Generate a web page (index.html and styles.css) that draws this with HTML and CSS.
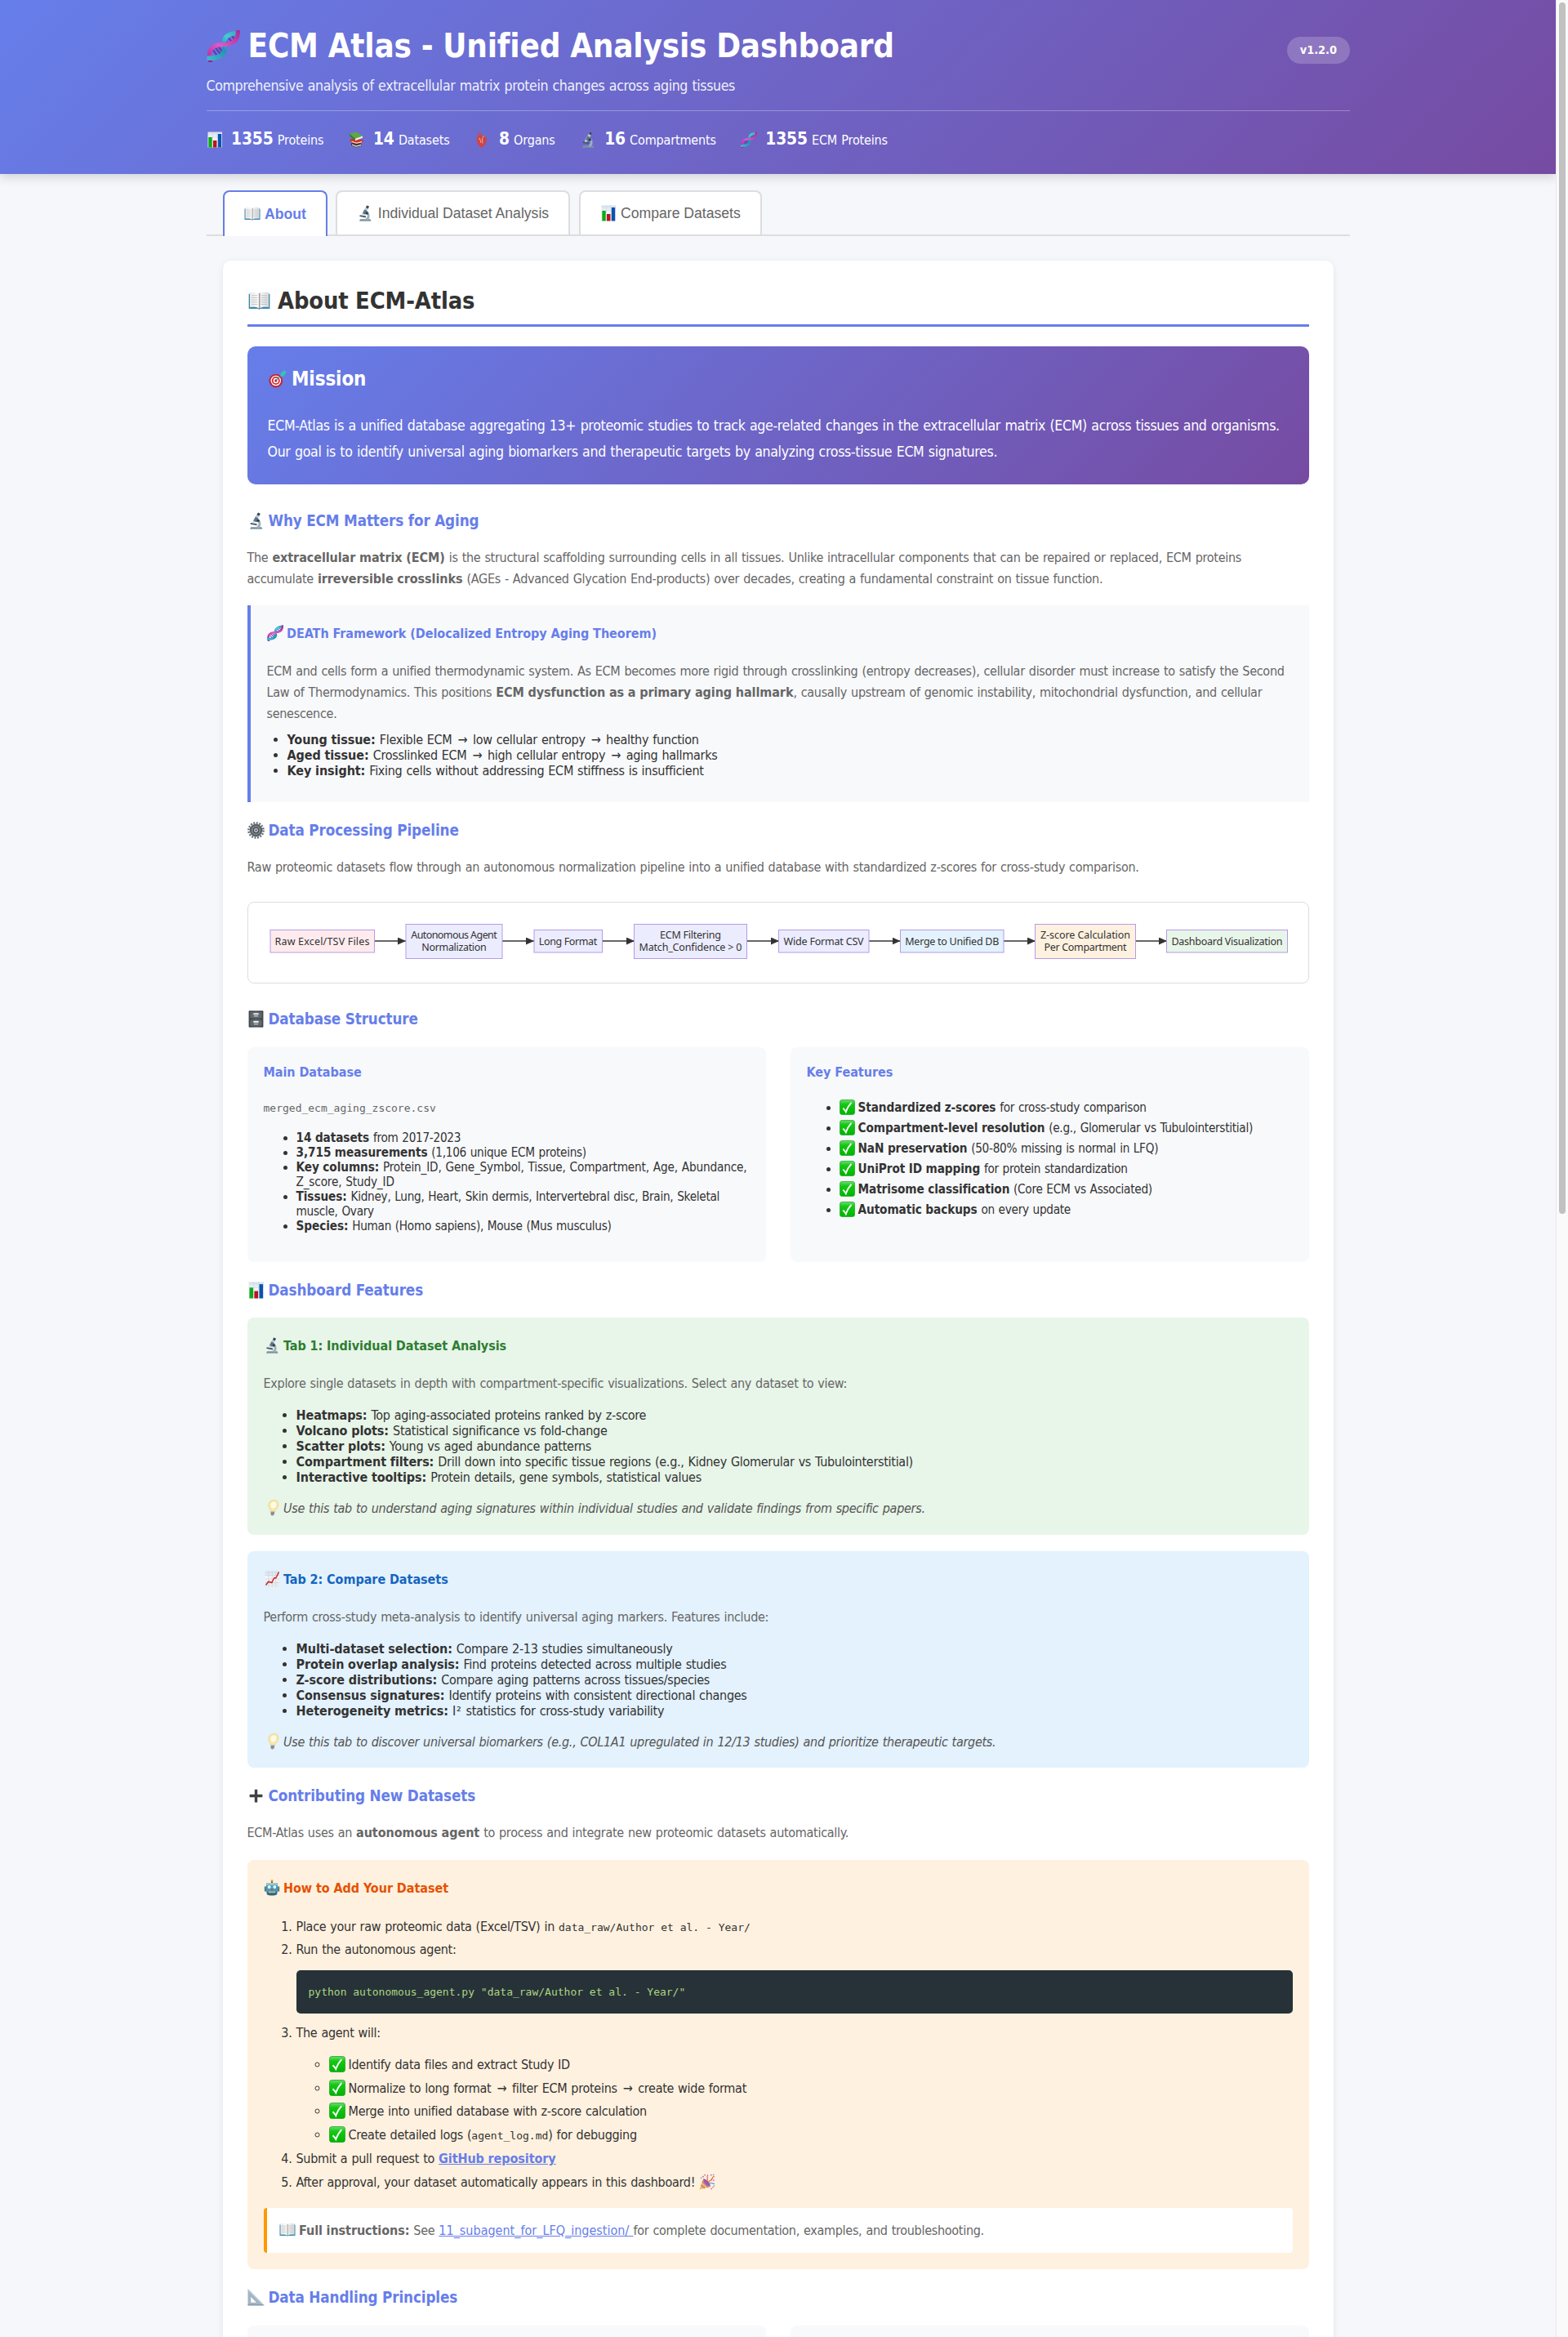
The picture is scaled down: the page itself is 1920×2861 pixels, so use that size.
FILE: index.html
```html
<!DOCTYPE html>
<html lang="en">
<head>
<meta charset="utf-8">
<title>ECM Atlas - Unified Analysis Dashboard</title>
<link rel="stylesheet" href="styles.css">
</head>
<body>
<svg class="sprite" aria-hidden="true">
  <defs>
    <linearGradient id="gPage" x1="0" x2="1"><stop offset="0" stop-color="#e9e9ea"/><stop offset=".45" stop-color="#fff"/><stop offset=".5" stop-color="#9a9a9a"/><stop offset=".58" stop-color="#f4f4f4"/><stop offset="1" stop-color="#d9d9dc"/></linearGradient>
    <linearGradient id="gSheet" x1="0" y1="0" x2="0" y2="1"><stop offset="0" stop-color="#d3deea"/><stop offset=".4" stop-color="#f3f6f8"/><stop offset="1" stop-color="#e6eaee"/></linearGradient>
    <linearGradient id="gCheck" x1="0" y1="0" x2="0" y2="1"><stop offset="0" stop-color="#6fdc6f"/><stop offset=".3" stop-color="#14c814"/><stop offset="1" stop-color="#00b400"/></linearGradient>
    <linearGradient id="gCab" x1="0" x2="1"><stop offset="0" stop-color="#454b50"/><stop offset=".5" stop-color="#6b7378"/><stop offset="1" stop-color="#454b50"/></linearGradient>
    <linearGradient id="gPink" gradientUnits="userSpaceOnUse" x1="0" y1="20" x2="20" y2="0"><stop offset="0" stop-color="#b3249c"/><stop offset=".45" stop-color="#e05ac8"/><stop offset="1" stop-color="#a32a96"/></linearGradient>
    <linearGradient id="gCyan" gradientUnits="userSpaceOnUse" x1="0" y1="20" x2="20" y2="0"><stop offset="0" stop-color="#3fc0cf"/><stop offset=".45" stop-color="#2a8fb5"/><stop offset=".7" stop-color="#45cbd6"/><stop offset="1" stop-color="#2f9cb5"/></linearGradient>
  </defs>
  <symbol id="i-dna" viewBox="0 0 20 20">
    <path d="M3.500 12.500l3.500 4.500M5 11l4 5M7 10.500l3 4M10.500 6.500l3 3M12.500 4.500l3.500 4M15 3.500l2.500 3.500" stroke="#5b3fae" stroke-width="1.100" fill="none"/>
    <path d="M10.600 10.500C9.300 5.500 12 2.300 20 2" fill="none" stroke="url(#gCyan)" stroke-width="2.800"/>
    <path d="M2 19.500C0 12.500 3.500 9.300 9.500 9.300S19 7.500 19 .5" fill="none" stroke="url(#gPink)" stroke-width="2.600"/>
    <path d="M0 17.600C7.500 17.600 11.600 16 10.600 10.500" fill="none" stroke="url(#gCyan)" stroke-width="2.900"/>
    <path d="M1 19.600h2.200" stroke="#8e1f80" stroke-width=".9"/>
  </symbol>
  <symbol id="i-bars" viewBox="0 0 20 20">
    <rect x="1.500" y=".5" width="17.500" height="19" fill="url(#gSheet)"/>
    <path d="M7.400.5v19M13 .5v19M1.500 7h17.500M1.500 13h17.500" stroke="#c8d2dc" stroke-width=".5"/>
    <rect x="2.300" y="7" width="4.400" height="12.500" fill="#0caa18"/><rect x="8" y="11" width="4.400" height="8.500" fill="#bd1220"/><rect x="13.800" y="3" width="4.400" height="16.500" fill="#0b52b4"/>
  </symbol>
  <symbol id="i-books" viewBox="0 0 20 20">
    <path d="M4 14.500l7-1.500 6 2v2.500l-7 2-6-2.500z" fill="#3a3232"/><path d="M5 16l5 2 6.500-1.700" stroke="#f4efe6" stroke-width="1.200" fill="none"/>
    <path d="M2.500 9.500l8-1 8 2v2.500l-8 2.500-7-2.500z" fill="#cf3328"/><path d="M4.500 12.300l6 2 6.500-1.700" stroke="#f4efe6" stroke-width="1.100" fill="none"/>
    <path d="M1.500 2.500L11 .800l7 4.700-9 3.300z" fill="#5da843"/><path d="M1.500 2.500L9 8.800v2.400L2.500 6z" fill="#397f2c"/><path d="M9 8.800l9-3.300v2.200L9 11.200z" fill="#f1eee2"/>
  </symbol>
  <symbol id="i-heart" viewBox="0 0 20 20">
    <path d="M8 1.500v5M11.500 1v5" stroke="#4b7fc4" stroke-width="2"/><path d="M5.500 4c1-2.500 3-2 3.800.5" stroke="#d9444c" stroke-width="2" fill="none"/>
    <path d="M4.500 6.500C7 3.500 9.500 4.500 11 4.800c3 .5 5.500 2.500 5 6.500-.5 3.500-3 7-6.500 8.200C6.500 18.500 2 11.500 4.500 6.500z" fill="#d4433f"/>
    <path d="M12.500 5.500c-3 2-2 6-1.500 9M6.500 8c1.500 1.500 2.500 3 2.500 6" stroke="#f5a090" stroke-width="1.100" fill="none"/><path d="M9.500 6c2.500 2 4 4 3.500 8" stroke="#4b6fb4" stroke-width=".8" fill="none"/>
  </symbol>
  <symbol id="i-scope" viewBox="0 0 20 20">
    <path d="M4 17.300h12.500l1 2.400H3z" fill="#7d93a2"/><path d="M10.500 8.500c4.500.5 5 7.500 1 9.300" stroke="#9db0bc" stroke-width="2.700" fill="none"/>
    <path d="M3.500 13.200l7.500 1.300" stroke="#4a5965" stroke-width="1.800"/><path d="M12.300.500l2.700 1.300-5 10-3.700-1.500z" fill="#b5c6d2"/><path d="M12.300.500l2.700 1.300-1.300 2.600L11 3z" fill="#39444f"/>
    <path d="M9.300 5.500l3.500 1.700-2.300 4.500-3.500-1.500z" fill="#5d7586"/><path d="M6.500 10l2.500 1.200-1 2-2-1z" fill="#cbd8e0"/><circle cx="12.300" cy="10" r="1.700" fill="#31404e"/>
  </symbol>
  <symbol id="i-book" viewBox="0 0 20 20">
    <path d="M.5 3.500h19V17H11l-1 .8-1-.8H.5z" fill="#3b87ab"/><path d="M1.500 2.300c3-.8 6-.8 8.500.6 2.500-1.400 5.500-1.400 8.500-.6v13.500c-3-.6-6-.5-8.500 1-2.500-1.500-5.500-1.600-8.500-1z" fill="url(#gPage)"/>
    <path d="M3 5h5.500M3 7h5.500M3 9h5.500M3 11h5.500M3 13h5.500M11.500 5H17M11.500 7H17M11.500 9H17M11.500 11H17M11.500 13H17" stroke="#b9b9bc" stroke-width=".6"/>
  </symbol>
  <symbol id="i-target" viewBox="0 0 20 20">
    <circle cx="8" cy="12" r="7.500" fill="#c71f2b"/><circle cx="8" cy="11.800" r="5.700" fill="#fff"/><circle cx="8" cy="11.800" r="4.500" fill="#d12a34"/><circle cx="8" cy="11.800" r="2.900" fill="#fff"/><circle cx="8" cy="11.800" r="1.500" fill="#c71f2b"/>
    <path d="M8 11.800L16 4" stroke="#3f8f94" stroke-width="1"/><path d="M13 6.800l.5-3.500L18 0l.3 1.700 1.700.4L16.500 7z" fill="#36c3b8"/>
  </symbol>
  <symbol id="i-gear" viewBox="0 0 20 20">
    <circle cx="10" cy="10" r="8.600" fill="none" stroke="#6b7279" stroke-width="2.500" stroke-dasharray="1.900 1.475"/><circle cx="10" cy="10" r="6.300" fill="#858c93" stroke="#596067" stroke-width="2.200"/><circle cx="10" cy="10" r="3" fill="#d9dcdf" stroke="#474d53" stroke-width="1.400"/><circle cx="10" cy="10" r="1.100" fill="#444"/>
  </symbol>
  <symbol id="i-cabinet" viewBox="0 0 20 20">
    <rect x="1.500" y=".3" width="17" height="19.400" rx=".8" fill="url(#gCab)"/><path d="M2.800 1.500h14.400v7.700H2.800zM2.800 10.700h14.400v7.700H2.800z" fill="#626a6f" stroke="#383d41" stroke-width=".6"/>
    <path d="M7 3h6v2H7zM7 12.200h6v2H7z" fill="#e8ebed"/><path d="M7.500 6.600h5M7.500 15.800h5" stroke="#c3c8cb" stroke-width="1.200"/>
  </symbol>
  <symbol id="i-trend" viewBox="0 0 20 20">
    <rect x="1.500" y=".5" width="17.500" height="19" fill="url(#gSheet)"/><path d="M6 .5v19M10.300 .5v19M14.600 .5v19M1.500 5.500h17.500M1.500 10h17.500M1.500 14.500h17.500" stroke="#bfc8d0" stroke-width=".5"/>
    <path d="M2.500 17.500l3.300-4.300 4 1.300 3-6 2 .5 3.700-7.500" fill="none" stroke="#cd2230" stroke-width="1.500"/>
  </symbol>
  <symbol id="i-bulb" viewBox="0 0 20 20">
    <g transform="translate(2.500 0) skewX(-6)"><path d="M10 .5c4 0 6 2.600 6 5.800 0 3.500-2.500 4.700-3.600 8.200H7.600C6.500 11 4 9.800 4 6.300 4 3.100 6 .5 10 .5z" fill="#fbe7a5" stroke="#e6cd8a" stroke-width=".6"/><ellipse cx="10" cy="6.500" rx="3.400" ry="4" fill="#fffbe6"/>
    <path d="M7.600 14.500h4.800l-.6 4.200-1.800 1-1.800-1z" fill="#9da2a6"/><path d="M7.700 16h4.600M8 17.700h4" stroke="#666b70" stroke-width=".6"/></g>
  </symbol>
  <symbol id="i-plus" viewBox="0 0 20 20"><path d="M10 2.500v15M2.500 10h15" stroke="#414141" stroke-width="3.200"/></symbol>
  <symbol id="i-robot" viewBox="0 0 20 20">
    <circle cx="10" cy="1.600" r="1.500" fill="#e8a52c"/><path d="M10 2.500v2" stroke="#a03535" stroke-width="2"/><path d="M.8 8.500h3v6h-3zM16.200 8.500h3v6h-3z" fill="#497f8c"/>
    <path d="M3.500 4h13c1 3.500 1.200 9 0 13-.5 2-2 2.500-6.500 2.500S4 19 3.500 17c-1.200-4-1-9.500 0-13z" fill="#5b93a1"/><path d="M3.700 4h12.600l.5 3H3.200z" fill="#9ccbd3"/><path d="M4 15h12l-.6 3.500c-2 1-8.800 1-10.800 0z" fill="#2f6676"/>
    <circle cx="6.700" cy="9" r="2.500" fill="#e6fbff" stroke="#3aa3c4" stroke-width="1"/><circle cx="13.300" cy="9" r="2.500" fill="#e6fbff" stroke="#3aa3c4" stroke-width="1"/><path d="M10 10.500l1.200 2.200H8.800z" fill="#d43f35"/><path d="M6 15.500h8" stroke="#e6e6e6" stroke-width="1.400" stroke-dasharray="1.200 .5"/>
  </symbol>
  <symbol id="i-party" viewBox="0 0 20 20">
    <path d="M5 6L14 16 .5 19.500z" fill="#f0be4a"/><path d="M4 9.500l7.500 7.500M2.500 14l4.500 4" stroke="#b56ac4" stroke-width="1.300"/><ellipse cx="9.500" cy="11" rx="2.100" ry="6" transform="rotate(-43 9.500 11)" fill="#9a58ac"/>
    <path d="M9.500 9.500C12 7 8 4.500 11 1.500M11 11c2-4 4-1 5-5 .5-2 1.500-2.500 3-2.500" fill="none" stroke="#e0604a" stroke-width="1.200"/><path d="M12 12c3-2.500 4 1.500 7 0" fill="none" stroke="#4f9ad6" stroke-width="1.200"/>
    <path d="M4.500 3l1 1.500M14 1.500l1.500.5M18.500 8l-1.500.5M16.500 16l1 1M7 1l.3 1.500M14.500 18.500h1.500" stroke="#d85fa8" stroke-width="1.500"/><path d="M2 5l1.200.5M17 1l1.300 1M18 14.500l1 .5" stroke="#52a3dc" stroke-width="1.400"/>
  </symbol>
  <symbol id="i-ruler" viewBox="0 0 20 20"><path d="M.5.5l19 19H.5zM4 9.500V16h6.500z" fill="#a3b4c4" fill-rule="evenodd"/><path d="M.5.5l19 19" stroke="#c5d2dd" stroke-width="1.300"/><path d="M.5 18.800h18" stroke="#8195a8" stroke-width="1"/></symbol>
  <symbol id="i-check" viewBox="0 0 20 20"><rect x=".5" y=".5" width="19" height="19" rx="2.800" fill="url(#gCheck)" stroke="#1fa52b" stroke-width=".8"/><path d="M4.500 11.200c1.700 1.600 2.800 3 3.700 4.700 1.500-4.300 3.700-8 7-11.700" fill="none" stroke="#fff" stroke-width="2"/></symbol>
</svg>

<div class="page">
<main class="view">
  <header class="header">
    <div class="container">
      <div class="header-top">
        <div>
          <h1><svg class="ic ic-h1"><use href="#i-dna"/></svg>ECM Atlas - Unified Analysis Dashboard</h1>
          <p class="subtitle">Comprehensive analysis of extracellular matrix protein changes across aging tissues</p>
        </div>
        <span class="version">v1.2.0</span>
      </div>
      <div class="stats">
        <div class="stat"><svg class="ic"><use href="#i-bars"/></svg><b>1355</b> Proteins</div>
        <div class="stat"><svg class="ic"><use href="#i-books"/></svg><b>14</b> Datasets</div>
        <div class="stat"><svg class="ic"><use href="#i-heart"/></svg><b>8</b> Organs</div>
        <div class="stat"><svg class="ic"><use href="#i-scope"/></svg><b>16</b> Compartments</div>
        <div class="stat"><svg class="ic"><use href="#i-dna"/></svg><b>1355</b> ECM Proteins</div>
      </div>
    </div>
  </header>

  <div class="container">
    <nav class="tabs">
      <button class="tab active"><svg class="ic"><use href="#i-book"/></svg>About</button>
      <button class="tab"><svg class="ic"><use href="#i-scope"/></svg>Individual Dataset Analysis</button>
      <button class="tab"><svg class="ic"><use href="#i-bars"/></svg>Compare Datasets</button>
    </nav>

    <section class="card">
      <h2><svg class="ic ic-h2"><use href="#i-book"/></svg>About ECM-Atlas</h2>

      <div class="mission">
        <h3><svg class="ic ic-m"><use href="#i-target"/></svg>Mission</h3>
        <p>ECM-Atlas is a unified database aggregating 13+ proteomic studies to track age-related changes in the extracellular matrix (ECM) across tissues and organisms. Our goal is to identify universal aging biomarkers and therapeutic targets by analyzing cross-tissue ECM signatures.</p>
      </div>

      <h3 class="sec why"><svg class="ic"><use href="#i-scope"/></svg>Why ECM Matters for Aging</h3>
      <p>The <strong>extracellular matrix (ECM)</strong> is the structural scaffolding surrounding cells in all tissues. Unlike intracellular components that can be repaired or replaced, ECM proteins accumulate <strong>irreversible crosslinks</strong> (AGEs - Advanced Glycation End-products) over decades, creating a fundamental constraint on tissue function.</p>

      <div class="framework">
        <h4><svg class="ic"><use href="#i-dna"/></svg>DEATh Framework (Delocalized Entropy Aging Theorem)</h4>
        <p>ECM and cells form a unified thermodynamic system. As ECM becomes more rigid through crosslinking (entropy decreases), cellular disorder must increase to satisfy the Second Law of Thermodynamics. This positions <strong>ECM dysfunction as a primary aging hallmark</strong>, causally upstream of genomic instability, mitochondrial dysfunction, and cellular senescence.</p>
        <ul>
          <li><strong>Young tissue:</strong> Flexible ECM <span class="arrow">→</span> low cellular entropy <span class="arrow">→</span> healthy function</li>
          <li><strong>Aged tissue:</strong> Crosslinked ECM <span class="arrow">→</span> high cellular entropy <span class="arrow">→</span> aging hallmarks</li>
          <li><strong>Key insight:</strong> Fixing cells without addressing ECM stiffness is insufficient</li>
        </ul>
      </div>

      <h3 class="sec"><svg class="ic"><use href="#i-gear"/></svg>Data Processing Pipeline</h3>
      <p>Raw proteomic datasets flow through an autonomous normalization pipeline into a unified database with standardized z-scores for cross-study comparison.</p>

      <div class="pipeline">
        <svg viewBox="0 0 1298 98" width="1298" height="98">
          <defs><marker id="head" viewBox="0 0 10 10" refX="10" refY="5" markerWidth="10" markerHeight="9" markerUnits="userSpaceOnUse" preserveAspectRatio="none" orient="auto"><path d="M0 0L10 5 0 10z" fill="#333"/></marker></defs>
          <g class="edges">
            <path d="M155 47H193"/><path d="M311 47H350"/><path d="M434 47H473"/><path d="M610.500 47H650"/><path d="M760 47H798.500"/><path d="M925 47H964"/><path d="M1086.500 47H1125"/>
          </g>
          <g class="nodes">
            <rect class="raw" x="27" y="33.500" width="127.500" height="27.500"/>
            <rect x="193" y="26.500" width="118" height="42"/>
            <rect x="350" y="33.500" width="83.500" height="27.500"/>
            <rect x="472.500" y="26.500" width="138" height="42"/>
            <rect x="649.500" y="33.500" width="110.500" height="27.500"/>
            <rect class="merge" x="798.500" y="33.500" width="126.500" height="27.500"/>
            <rect class="score" x="963.500" y="26.500" width="123" height="42"/>
            <rect class="dash" x="1124.500" y="33.500" width="148" height="27.500"/>
          </g>
          <g class="labels">
            <text x="90.500" y="52" textLength="116">Raw Excel/TSV Files</text>
            <text x="252" y="44" textLength="105.500">Autonomous Agent</text><text x="252" y="59" textLength="79.500">Normalization</text>
            <text x="391.500" y="52" textLength="71.500">Long Format</text>
            <text x="541.500" y="44" textLength="75">ECM Filtering</text><text x="541.500" y="59" textLength="126">Match_Confidence &gt; 0</text>
            <text x="704.600" y="52" textLength="98">Wide Format CSV</text>
            <text x="861.800" y="52" textLength="115">Merge to Unified DB</text>
            <text x="1025" y="44" textLength="110">Z-score Calculation</text><text x="1025" y="59" textLength="101">Per Compartment</text>
            <text x="1198.500" y="52" textLength="136">Dashboard Visualization</text>
          </g>
        </svg>
      </div>

      <h3 class="sec db"><svg class="ic"><use href="#i-cabinet"/></svg>Database Structure</h3>
      <div class="grid">
        <div class="panel">
          <h4>Main Database</h4>
          <p><code>merged_ecm_aging_zscore.csv</code></p>
          <ul>
            <li><strong>14 datasets</strong> from 2017-2023</li>
            <li><strong>3,715 measurements</strong> (1,106 unique ECM proteins)</li>
            <li><strong>Key columns:</strong> <span class="cols">Protein_ID, Gene_Symbol, Tissue, Compartment, Age, Abundance, Z_score, Study_ID</span></li>
            <li><strong>Tissues:</strong> Kidney, Lung, Heart, Skin dermis, Intervertebral disc, Brain, Skeletal muscle, Ovary</li>
            <li><strong>Species:</strong> Human (Homo sapiens), Mouse (Mus musculus)</li>
          </ul>
        </div>
        <div class="panel">
          <h4>Key Features</h4>
          <ul class="checks">
            <li><svg class="ic"><use href="#i-check"/></svg><strong>Standardized z-scores</strong> for cross-study comparison</li>
            <li><svg class="ic"><use href="#i-check"/></svg><strong>Compartment-level resolution</strong> (e.g., Glomerular vs Tubulointerstitial)</li>
            <li><svg class="ic"><use href="#i-check"/></svg><strong>NaN preservation</strong> (50-80% missing is normal in LFQ)</li>
            <li><svg class="ic"><use href="#i-check"/></svg><strong>UniProt ID mapping</strong> for protein standardization</li>
            <li><svg class="ic"><use href="#i-check"/></svg><strong>Matrisome classification</strong> (Core ECM vs Associated)</li>
            <li><svg class="ic"><use href="#i-check"/></svg><strong>Automatic backups</strong> on every update</li>
          </ul>
        </div>
      </div>

      <h3 class="sec feat"><svg class="ic"><use href="#i-bars"/></svg>Dashboard Features</h3>
      <div class="box green">
        <h4><svg class="ic"><use href="#i-scope"/></svg>Tab 1: Individual Dataset Analysis</h4>
        <p>Explore single datasets in depth with compartment-specific visualizations. Select any dataset to view:</p>
        <ul>
          <li><strong>Heatmaps:</strong> Top aging-associated proteins ranked by z-score</li>
          <li><strong>Volcano plots:</strong> Statistical significance vs fold-change</li>
          <li><strong>Scatter plots:</strong> Young vs aged abundance patterns</li>
          <li><strong>Compartment filters:</strong> Drill down into specific tissue regions (e.g., Kidney Glomerular vs Tubulointerstitial)</li>
          <li><strong>Interactive tooltips:</strong> Protein details, gene symbols, statistical values</li>
        </ul>
        <p class="tip"><svg class="ic"><use href="#i-bulb"/></svg>Use this tab to understand aging signatures within individual studies and validate findings from specific papers.</p>
      </div>
      <div class="box blue">
        <h4><svg class="ic"><use href="#i-trend"/></svg>Tab 2: Compare Datasets</h4>
        <p>Perform cross-study meta-analysis to identify universal aging markers. Features include:</p>
        <ul>
          <li><strong>Multi-dataset selection:</strong> Compare 2-13 studies simultaneously</li>
          <li><strong>Protein overlap analysis:</strong> Find proteins detected across multiple studies</li>
          <li><strong>Z-score distributions:</strong> Compare aging patterns across tissues/species</li>
          <li><strong>Consensus signatures:</strong> Identify proteins with consistent directional changes</li>
          <li><strong>Heterogeneity metrics:</strong> <span class="stat-i">I²</span> statistics for cross-study variability</li>
        </ul>
        <p class="tip"><svg class="ic"><use href="#i-bulb"/></svg>Use this tab to discover universal biomarkers (e.g., COL1A1 upregulated in 12/13 studies) and prioritize therapeutic targets.</p>
      </div>

      <h3 class="sec"><svg class="ic"><use href="#i-plus"/></svg>Contributing New Datasets</h3>
      <p>ECM-Atlas uses an <strong>autonomous agent</strong> to process and integrate new proteomic datasets automatically.</p>
      <div class="howto">
        <h4><svg class="ic"><use href="#i-robot"/></svg>How to Add Your Dataset</h4>
        <ol>
          <li>Place your raw proteomic data (Excel/TSV) in <code>data_raw/Author et al. - Year/</code></li>
          <li>Run the autonomous agent:<pre><code>python autonomous_agent.py "data_raw/Author et al. - Year/"</code></pre></li>
          <li>The agent will:
            <ul>
              <li><svg class="ic"><use href="#i-check"/></svg>Identify data files and extract Study ID</li>
              <li><svg class="ic"><use href="#i-check"/></svg>Normalize to long format <span class="arrow">→</span> filter ECM proteins <span class="arrow">→</span> create wide format</li>
              <li><svg class="ic"><use href="#i-check"/></svg>Merge into unified database with z-score calculation</li>
              <li><svg class="ic"><use href="#i-check"/></svg>Create detailed logs (<code>agent_log.md</code>) for debugging</li>
            </ul>
          </li>
          <li>Submit a pull request to <a href="#"><strong>GitHub repository</strong></a></li>
          <li>After approval, your dataset automatically appears in this dashboard! <svg class="ic"><use href="#i-party"/></svg></li>
        </ol>
        <p class="note"><svg class="ic"><use href="#i-book"/></svg><strong>Full instructions:</strong> See <a class="doc" href="#">11_subagent_for_LFQ_ingestion/&nbsp;</a>for complete documentation, examples, and troubleshooting.</p>
      </div>

      <h3 class="sec"><svg class="ic"><use href="#i-ruler"/></svg>Data Handling Principles</h3>
      <div class="grid last"><div class="panel"></div><div class="panel"></div></div>
    </section>
  </div>
</main>
<div class="scrollbar"><div class="thumb"></div></div>
</div>
</body>
</html>
```

FILE: styles.css
```css
* { box-sizing: border-box; margin: 0; padding: 0; }

html, body { height: 2861px; overflow: hidden; }

body {
  font-family: "DejaVu Sans Condensed", "DejaVu Sans", sans-serif;
  font-stretch: condensed;
  font-size: 16px;
  letter-spacing: -0.018em;
  word-spacing: 0.045em;
  color: #333;
  background: #f5f7fa;
}

h1, h2, h3, h4, strong, b { letter-spacing: -0.005em; word-spacing: -0.01em; }

.sprite { display: block; width: 0; height: 0; }
.page { display: flex; height: 2861px; overflow: hidden; }
.view { width: 1905px; flex: none; overflow: hidden; height: 2861px; }
.container { width: 1400px; margin: 0 auto; }
.ic { width: 20px; height: 20px; vertical-align: -4px; margin-right: 4.500px; }

/* header */
.header {
  height: 213px;
  padding-top: 32px;
  color: #fff;
  background: linear-gradient(135deg, #667eea 0%, #764ba2 100%);
  box-shadow: 0 4px 12px rgba(0, 0, 0, 0.15);
}
.header-top { display: flex; justify-content: space-between; align-items: flex-start; }
h1 { font-size: 40px; line-height: 48px; }
.ic-h1 { width: 41px; height: 40px; vertical-align: -6px; margin-right: 10px; }
.header .subtitle { margin-top: 14px; font-size: 17.600px; line-height: 22px; letter-spacing: -0.021em; color: #fff; opacity: 0.9; }
.version {
  margin-top: 13px;
  padding: 0 15.500px;
  height: 33px;
  border-radius: 20px;
  background: rgba(255, 255, 255, 0.2);
  font-size: 14.400px;
  line-height: 33px;
  font-weight: bold;
  letter-spacing: 0;
}
.stats {
  display: flex;
  gap: 30px;
  margin-top: 19px;
  padding-top: 21px;
  border-top: 1px solid rgba(255, 255, 255, 0.3);
  line-height: 26px;
  letter-spacing: -0.01em;
}
.stat b { font-size: 20.800px; }
.stat .ic { margin-right: 10.500px; }

/* tabs */
.tabs {
  display: flex;
  gap: 10.500px;
  height: 56px;
  margin-top: 20px;
  padding: 0 20px;
  border-bottom: 2px solid #ddd;
}
.tab {
  height: 54px;
  padding: 0 24px;
  border: 2px solid #ddd;
  border-bottom: none;
  border-radius: 8px 8px 0 0;
  background: #fff;
  color: #666;
  font-family: "Liberation Sans", Arial, sans-serif;
  font-size: 17.600px;
  letter-spacing: 0;
  word-spacing: 0;
}
.tab .ic { margin-right: 5.500px; }
.tab.active {
  height: 56px;
  border-color: #667eea;
  color: #667eea;
  font-weight: bold;
}

/* content card */
.card {
  height: 2700px;
  margin: 30px 20px 0;
  padding: 30px;
  border-radius: 10px;
  background: #fff;
  box-shadow: 0 2px 8px rgba(0, 0, 0, 0.08);
}
h2 {
  font-size: 28.800px;
  line-height: 38px;
  padding-bottom: 10px;
  border-bottom: 3px solid #667eea;
}
.ic-h2 { width: 29px; height: 27px; margin-right: 8.500px; }
.mission {
  height: 169px;
  margin-top: 24px;
  padding: 25px;
  border-radius: 10px;
  color: #fff;
  background: linear-gradient(135deg, #667eea 0%, #764ba2 100%);
}
.mission h3 { font-size: 24px; line-height: 30px; }
.ic-m { width: 24px; height: 22px; margin-right: 5.500px; vertical-align: -3px; }
.mission p { margin-top: 26px; font-size: 17.600px; line-height: 32px; letter-spacing: -0.0185em; color: #fff; }

p { color: #666; line-height: 26px; }
h4 { font-size: 16px; line-height: 21px; letter-spacing: -0.002em; color: #667eea; }
code, pre { font-family: "DejaVu Sans Mono", monospace; font-stretch: normal; font-size: 13px; line-height: 1; letter-spacing: 0; word-spacing: 0; }
a { color: #667eea; }
.arrow { margin: 0 1.700px 0 2px; }
.stat-i { letter-spacing: 0.05em; }
.cols { letter-spacing: -0.011em; }

.sec { margin: 23px 0 21px; font-size: 18.720px; line-height: 24px; letter-spacing: -0.006em; color: #667eea; }
.sec + p { margin-top: -1px; }
.sec .ic { width: 21px; height: 21px; margin-right: 5px; }
.sec.why { margin: 33px 0 21px; }
.sec.db { margin: 32px 0 22px; }
.sec.feat { margin-bottom: 21px; }

.framework {
  height: 241px;
  margin-top: 19px;
  padding: 24px 20px 0;
  border-left: 4px solid #667eea;
  background: #f8f9fb;
}
.framework p { margin-top: 22.500px; }
.framework ul { margin-top: 9.500px; padding-left: 25px; line-height: 19px; }

/* pipeline diagram */
.pipeline { height: 100px; margin-top: 29px; border: 1px solid #ddd; border-radius: 8px; }
.pipeline svg { display: block; }
.edges path { stroke: #333; stroke-width: 1.600; marker-end: url(#head); }
.nodes rect { fill: #ececff; stroke: #b39ce6; stroke-width: 1; }
.nodes .raw { fill: #ffebee; }
.nodes .merge { fill: #e3f2fd; }
.nodes .score { fill: #fff1e0; }
.nodes .dash { fill: #e8f5e9; }
.labels text {
  font-family: "Noto Sans", "Open Sans", sans-serif;
  font-stretch: normal;
  font-size: 12.500px;
  text-anchor: middle;
  fill: #333;
  letter-spacing: 0;
  word-spacing: 0;
}

/* two-column panels */
.grid { display: grid; grid-template-columns: 1fr 1fr; gap: 30px; height: 263px; }
.panel { padding: 20px; border-radius: 8px; background: #f8f9fb; }
.panel p { margin-top: 19.500px; }
.panel ul { margin-top: 15.500px; padding-left: 40px; font-size: 15.200px; line-height: 18px; }
.panel .checks { margin-top: 21px; line-height: 25px; }
.checks .ic { width: 19px; height: 19px; margin-right: 4px; }
.last { margin-top: 22px; }

/* feature boxes */
.box { padding: 24px 20px 0; border-radius: 8px; }
.green { height: 266px; background: #e8f5e9; }
.green h4 { color: #2e7d32; }
.blue { height: 265px; margin-top: 20px; background: #e3f2fd; }
.blue h4 { color: #1565c0; }
.box p { margin-top: 23px; }
.box ul { margin-top: 16px; padding-left: 40px; line-height: 19px; }
.box .tip { margin-top: 18px; line-height: 20px; font-style: italic; color: #555; }

/* contribution guide */
.howto { height: 501px; margin-top: 20px; padding: 24px 20px 0; border-radius: 8px; background: #fff1df; }
.howto h4 { color: #e65100; }
.howto ol { margin-top: 22.500px; padding-left: 40px; line-height: 28.800px; }
.howto ul { margin-top: 10px; padding-left: 40px; }
.howto li .ic { margin-right: 4px; }
.howto pre {
  height: 53px;
  margin: 10px 0;
  padding: 15px;
  border-radius: 5px;
  background: #263238;
  color: #aed581;
  line-height: 23px;
}
.note {
  height: 55px;
  margin-top: 16px;
  padding: 0 15px;
  border-left: 4px solid #ff9800;
  border-radius: 4px;
  background: #fff;
  line-height: 56px;
}
.doc { letter-spacing: 0; }

/* scrollbar */
.scrollbar { width: 15px; padding: 3px 3px 0; background: #fafafa; border-left: 1px solid #e8e8e8; }
.thumb { width: 8px; height: 1483px; border-radius: 4px; background: #c1c1c1; }
```
